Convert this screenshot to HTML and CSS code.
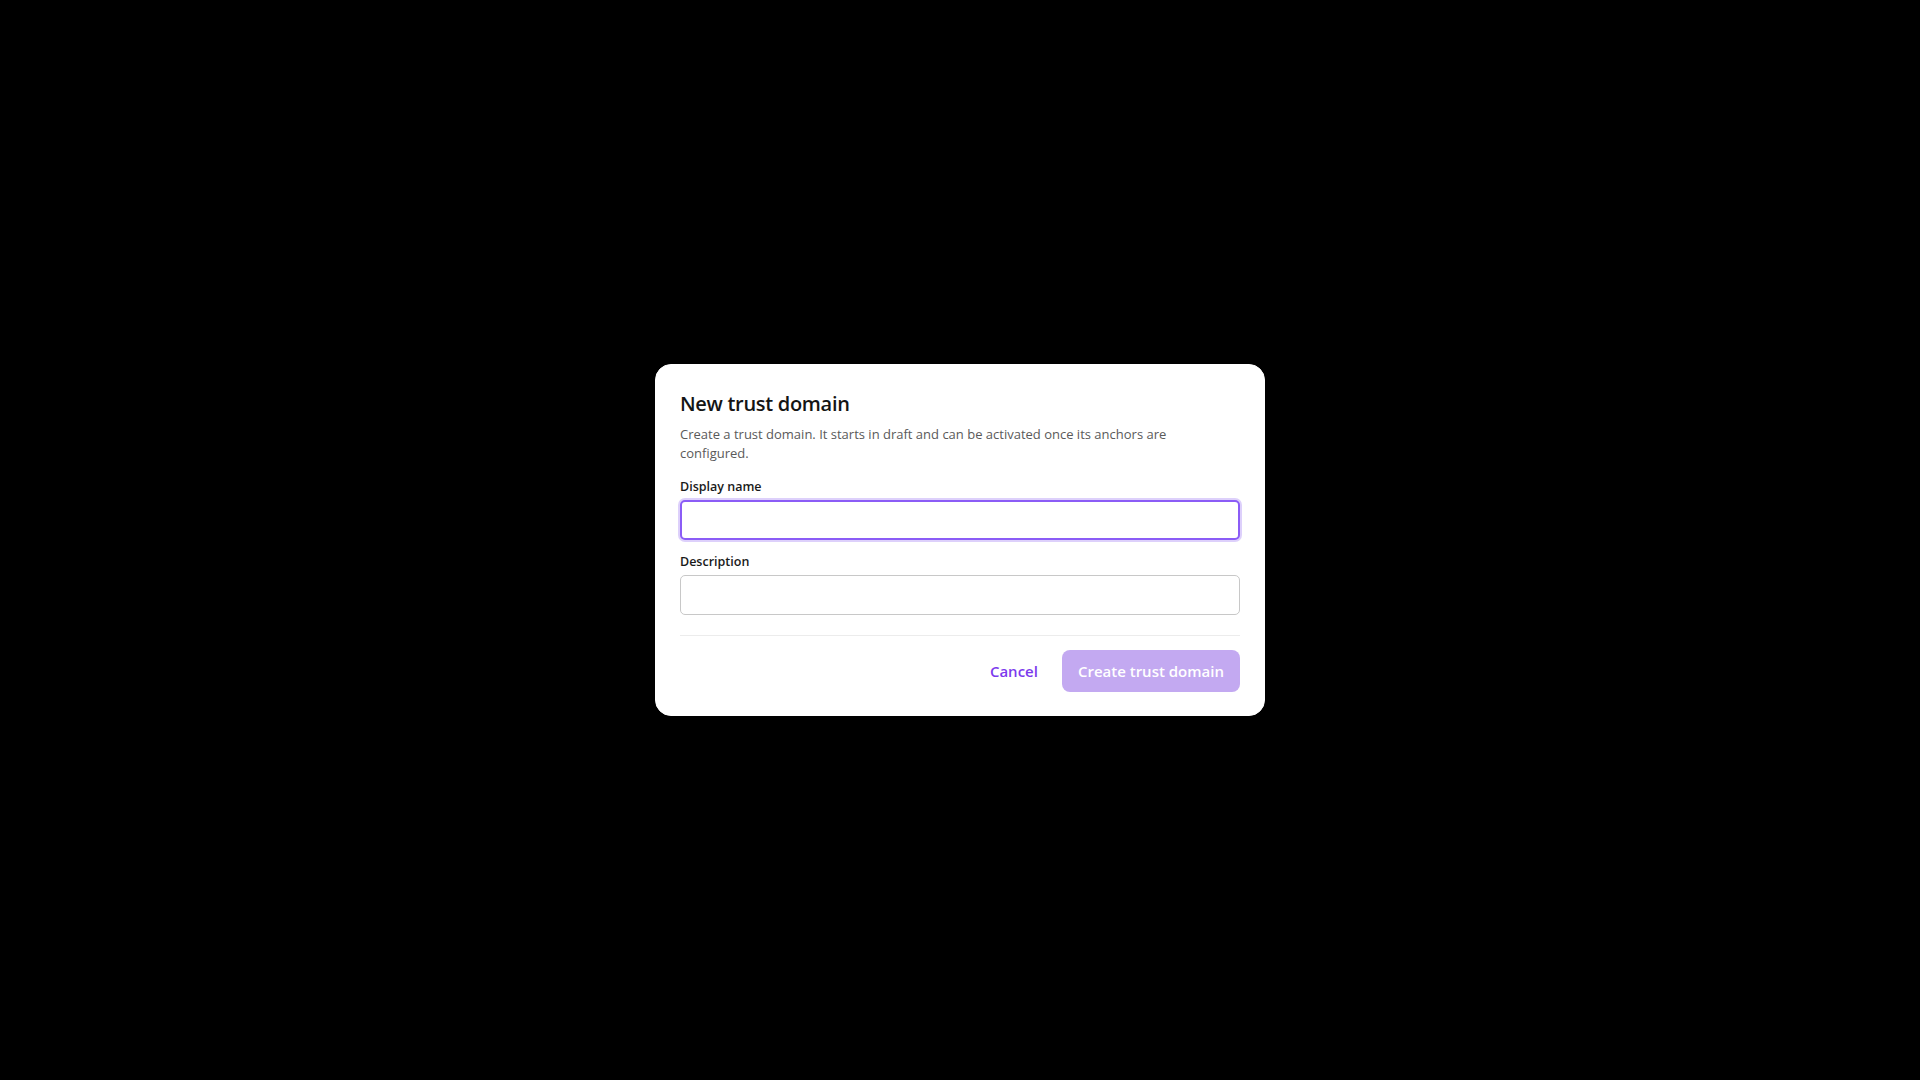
FILE: index.html
```html
<!DOCTYPE html>
<html lang="en">
<head>
<meta charset="utf-8">
<title>New trust domain</title>
<link rel="stylesheet" href="styles.css">
</head>
<body>
<div class="overlay">
  <div class="dialog" role="dialog" aria-labelledby="dlg-title">
    <h2 class="title" id="dlg-title">New trust domain</h2>
    <p class="desc">Create a trust domain. It starts in draft and can be activated once its anchors are configured.</p>
    <div class="field first">
      <label class="label" for="dn">Display name</label>
      <input class="input focused" id="dn" type="text">
    </div>
    <div class="field">
      <label class="label" for="ds">Description</label>
      <input class="input" id="ds" type="text">
    </div>
    <div class="footer">
      <button class="btn-link" type="button">Cancel</button>
      <button class="btn-primary" type="button" disabled>Create trust domain</button>
    </div>
  </div>
</div>
</body>
</html>
```

FILE: styles.css
```css
html, body {
  margin: 0;
  padding: 0;
  height: 100%;
  background: #000;
}
body {
  font-family: "Open Sans", "Noto Sans", sans-serif;
}
.overlay {
  height: 100%;
  display: flex;
  align-items: center;
  justify-content: center;
}
.dialog {
  width: 560px;
  background: #fff;
  border: 1px solid #fff;
  border-radius: 16px;
  padding: 25px 24px 23px;
  display: flex;
  flex-direction: column;
}
.title {
  margin: 0;
  font-size: 20px;
  line-height: 28px;
  font-weight: 600;
  color: #141414;
  letter-spacing: -0.3px;
}
.desc {
  margin: 7px 0 0;
  max-width: 520px;
  font-size: 13px;
  line-height: 18.7px;
  color: #5a5a5a;
}
.field {
  display: flex;
  flex-direction: column;
  margin-top: 13px;
}
.field.first {
  margin-top: 15px;
}
.label {
  font-size: 12.5px;
  line-height: 18px;
  font-weight: 600;
  color: #1a1a1a;
  margin-bottom: 4px;
}
.input {
  box-sizing: border-box;
  height: 40px;
  width: 100%;
  margin: 0;
  border: 1px solid #c8c8c8;
  border-radius: 5px;
  background: #fff;
  font: inherit;
  outline: none;
}
.input.focused {
  border: 2px solid #8b5cf6;
  box-shadow: 0 0 0 2px #ddd0fb;
}
.footer {
  margin-top: 20px;
  border-top: 1px solid #ececec;
  padding-top: 14px;
  display: flex;
  justify-content: flex-end;
  align-items: center;
  gap: 24px;
}
.btn-link {
  border: 0;
  background: none;
  padding: 0;
  font-family: inherit;
  font-size: 15px;
  font-weight: 600;
  color: #7c3aed;
  cursor: pointer;
}
.btn-primary {
  height: 42px;
  border: 0;
  border-radius: 8px;
  padding: 0 16px;
  background: #c3a9f1;
  color: #fff;
  font-family: inherit;
  font-size: 15px;
  font-weight: 600;
}
```
